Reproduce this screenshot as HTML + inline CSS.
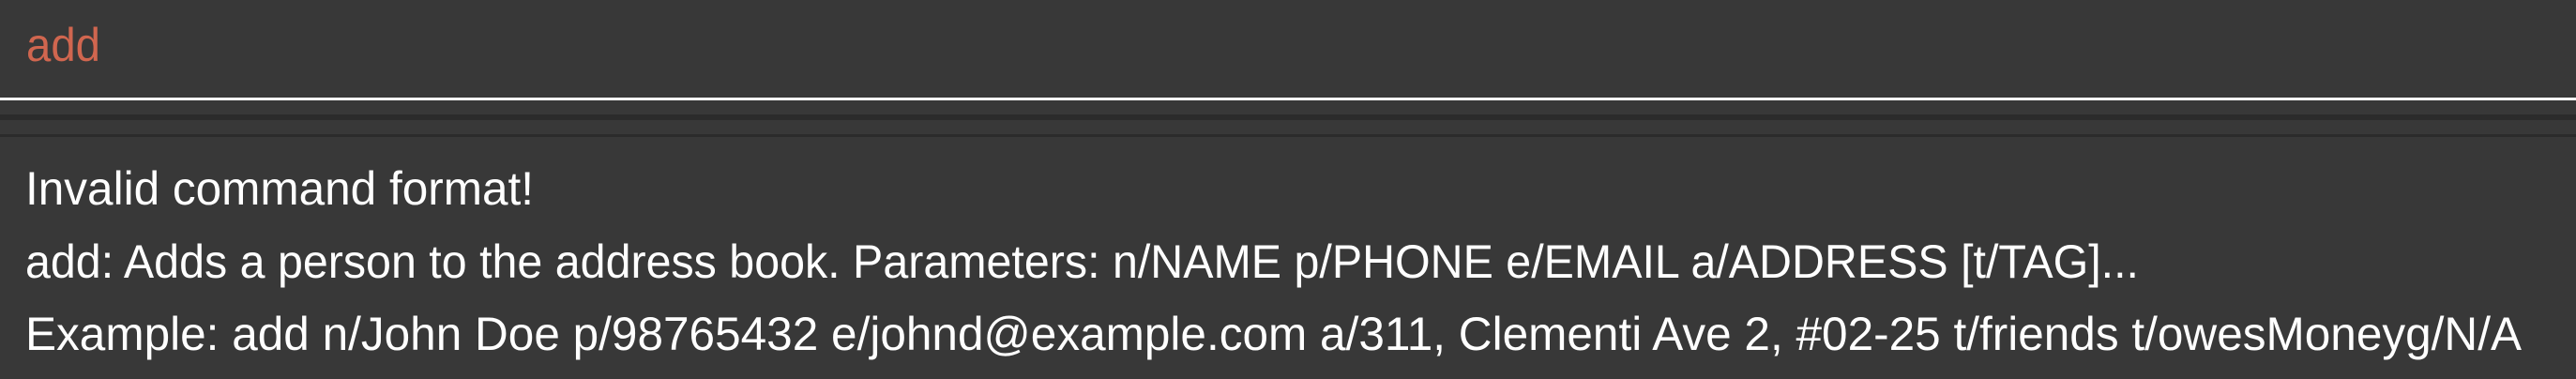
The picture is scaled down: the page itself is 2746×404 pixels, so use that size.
<!DOCTYPE html>
<html><head><style>
html,body{margin:0;padding:0;background:#383838;width:2746px;height:404px;overflow:hidden}
</style></head><body>
<svg width="2746" height="404" xmlns="http://www.w3.org/2000/svg" style="display:block">
<rect width="2746" height="404" fill="#383838"/>
<rect x="0" y="104" width="2746" height="3" fill="#ffffff"/>
<rect x="0" y="122" width="2746" height="6" fill="#2b2b2b"/>
<rect x="0" y="143" width="2746" height="3" fill="#2b2b2b"/>
<g font-family="Liberation Sans, sans-serif" font-size="50">
<text x="28" y="65" fill="#d0664f" textLength="79" lengthAdjust="spacingAndGlyphs">add</text>
<text x="27" y="218" fill="#ffffff" textLength="542" lengthAdjust="spacingAndGlyphs">Invalid command format!</text>
<text x="27" y="296" fill="#ffffff" textLength="2253" lengthAdjust="spacingAndGlyphs">add: Adds a person to the address book. Parameters: n/NAME p/PHONE e/EMAIL a/ADDRESS [t/TAG]...</text>
<text x="27" y="373" fill="#ffffff" textLength="2661" lengthAdjust="spacingAndGlyphs">Example: add n/John Doe p/98765432 e/johnd@example.com a/311, Clementi Ave 2, #02-25 t/friends t/owesMoneyg/N/A</text>
</g>
</svg>
</body></html>
